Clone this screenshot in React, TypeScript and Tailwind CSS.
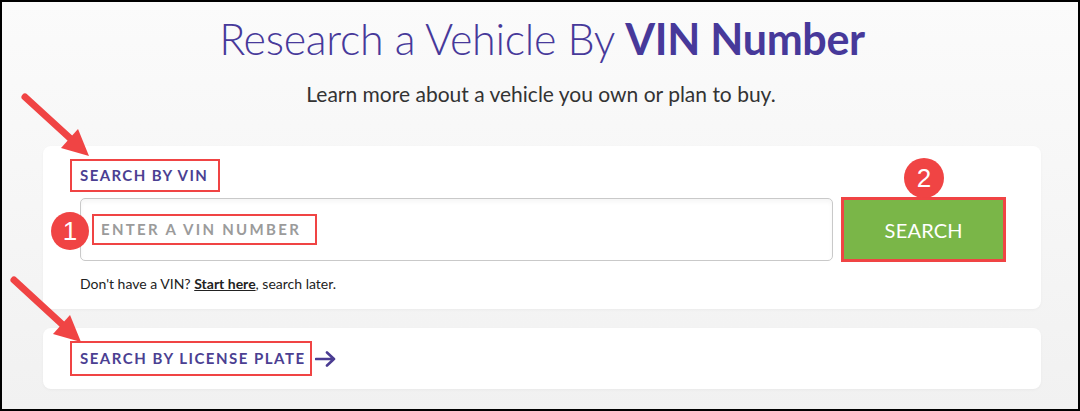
import React from "react";

const lato = { fontFamily: "Lato, 'Open Sans', sans-serif" };

export default function App() {
  return (
    <div
      className="relative w-[1080px] h-[411px] overflow-hidden border-2 border-black bg-gradient-to-b from-[#fbfbfb] to-[#f1f1f1]"
      style={lato}
    >
      <div className="flex flex-col items-center pt-[9px]">
        <h1 className="text-[43px] leading-[56px] font-light text-[#47399a] tracking-[-0.3px] ml-[4px]">
          Research a Vehicle By <span className="font-bold">VIN Number</span>
        </h1>
        <p className="mt-[14px] text-[21px] leading-[26px] text-[#333333] ml-[2px]">
          Learn more about a vehicle you own or plan to buy.
        </p>
      </div>

      <div className="ml-[41px] mt-[39px] w-[998px] flex flex-col gap-[19px]">
        {/* Card 1 */}
        <div className="h-[163px] rounded-[8px] bg-white shadow-[0_1px_3px_rgba(0,0,0,0.04)] pl-[37px] pr-[35px] pt-[13px]">
          <div className="-ml-[10px] inline-flex h-[33px] items-center border-2 border-[#f04444] pl-[8px] pr-[10px]">
            <span className="text-[15px] font-bold tracking-[1.4px] text-[#4b3f92]">SEARCH BY VIN</span>
          </div>
          <div className="mt-[6px] flex items-start gap-[8px]">
            <div className="relative h-[63px] w-[755px] rounded-[5px] border border-[#c9c9c9] bg-white shadow-[inset_0_3px_4px_rgba(0,0,0,0.04)] flex items-center pl-[11px]">
              <div className="flex h-[31px] items-center border-2 border-[#f04444] pl-[7px] pr-[14px]">
                <span className="text-[15px] font-bold tracking-[2.3px] text-[#9b9b9b]">ENTER A VIN NUMBER</span>
              </div>
            </div>
            <button className="-mt-[1px] h-[65px] w-[165px] border-[3px] border-[#f04444] bg-[#7ab648] text-[20px] text-white tracking-[0.2px]">
              SEARCH
            </button>
          </div>
          <p className="mt-[11px] text-[14px] text-[#222222]">
            Don't have a VIN? <span className="font-bold underline">Start here</span>, search later.
          </p>
        </div>

        {/* Card 2 */}
        <div className="h-[61px] rounded-[8px] bg-white shadow-[0_1px_3px_rgba(0,0,0,0.04)] pl-[37px] flex items-center">
          <div className="-ml-[10px] inline-flex h-[35px] items-center border-2 border-[#f04444] pl-[8px] pr-[4px]">
            <span className="text-[15px] font-bold tracking-[1.5px] text-[#4b3f92]">SEARCH BY LICENSE PLATE</span>
          </div>
          <svg width="22" height="16" viewBox="0 0 22 16" className="ml-[3px]" fill="none">
            <path d="M1 8 H19 M12 1.5 L19 8 L12 14.5" stroke="#4a3c92" strokeWidth="2.6" strokeLinecap="round" strokeLinejoin="round" />
          </svg>
        </div>
      </div>

      {/* Annotations */}
      <div className="absolute left-[49px] top-[210px] flex h-[38px] w-[38px] items-center justify-center rounded-full bg-[#f04444] text-[26px] text-white" style={{ fontFamily: "'Liberation Sans', Arial, sans-serif" }}>
        1
      </div>
      <div className="absolute left-[902px] top-[156px] flex h-[40px] w-[40px] items-center justify-center rounded-full bg-[#f04444] text-[26px] text-white" style={{ fontFamily: "'Liberation Sans', Arial, sans-serif" }}>
        2
      </div>
      <svg className="pointer-events-none absolute left-[-2px] top-[-2px]" width="1080" height="411" viewBox="0 0 1080 411">
        <line x1="25" y1="97" x2="72" y2="140" stroke="#f04444" strokeWidth="7" strokeLinecap="round" />
        <polygon points="89,156 61,148 78,129" fill="#f04444" />
        <line x1="14" y1="280" x2="64" y2="326" stroke="#f04444" strokeWidth="7" strokeLinecap="round" />
        <polygon points="81,342 53,334 70,315" fill="#f04444" />
      </svg>
    </div>
  );
}
